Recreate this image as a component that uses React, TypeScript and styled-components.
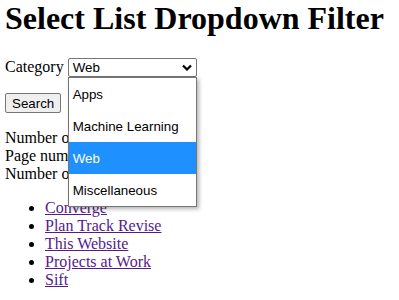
import React from "react";
import styled, { createGlobalStyle } from "styled-components";

const categories = ["Apps", "Machine Learning", "Web", "Miscellaneous"];
const selected = "Web";

const projects = [
  "Converge",
  "Plan Track Revise",
  "This Website",
  "Projects at Work",
  "Sift",
];

const GlobalStyle = createGlobalStyle`
  html, body {
    background: #ffffff;
  }
  body {
    margin: 0 5px;
    font-family: "Liberation Serif", "Times New Roman", serif;
    font-size: 16px;
    color: #000000;
  }
`;

const Title = styled.h1`
  font-size: 32px;
  font-weight: 700;
  margin: 0 0 21px;
`;

const FilterForm = styled.form`
  margin: 0;
`;

const FieldRow = styled.div`
  display: block;
`;

const Label = styled.label`
  margin-right: 4px;
`;

const SelectWrap = styled.span`
  position: relative;
  display: inline-block;
`;

const SelectBox = styled.div`
  box-sizing: border-box;
  display: inline-flex;
  align-items: center;
  justify-content: space-between;
  width: 129px;
  height: 19px;
  padding: 0 3px 0 4px;
  border: 1px solid #767676;
  border-radius: 2px;
  background: #ffffff;
  font-family: "Liberation Sans", Arial, sans-serif;
  font-size: 13.33px;
  color: #000000;
`;

const Chevron = styled.svg`
  width: 10px;
  height: 7px;
  margin-right: 1px;
`;

const Popup = styled.ul`
  position: absolute;
  top: 100%;
  left: 0;
  box-sizing: border-box;
  width: 129px;
  margin: 0;
  padding: 0;
  list-style: none;
  background: #ffffff;
  border: 1px solid #767676;
  box-shadow: 2px 2px 4px rgba(0, 0, 0, 0.3);
  z-index: 10;
`;

const Option = styled.li<{ $active: boolean }>`
  height: 31px;
  padding: 1px 0 0 4px;
  line-height: 32px;
  font-family: "Liberation Sans", Arial, sans-serif;
  font-size: 13.33px;
  white-space: nowrap;
  background: ${(p) => (p.$active ? "#1e90ff" : "#ffffff")};
  color: ${(p) => (p.$active ? "#ffffff" : "#000000")};
`;

const ButtonRow = styled.div`
  margin-top: 16px;
`;

const SearchButton = styled.button`
  box-sizing: border-box;
  height: 20px;
  padding: 0 6px;
  border: 1px solid #767676;
  border-radius: 2px;
  background: #efefef;
  font-family: "Liberation Sans", Arial, sans-serif;
  font-size: 13.33px;
  color: #000000;
`;

const Stats = styled.div`
  margin-top: 16px;
`;

const ProjectList = styled.ul`
  margin: 16px 0;
  padding-left: 40px;
`;

const ProjectLink = styled.a`
  color: #551a8b;
`;

export default function App() {
  return (
    <>
      <GlobalStyle />
      <Title>Select List Dropdown Filter</Title>
      <FilterForm onSubmit={(e) => e.preventDefault()}>
        <FieldRow>
          <Label>Category</Label>
          <SelectWrap>
            <SelectBox>
              <span>{selected}</span>
              <Chevron viewBox="0 0 10 7">
                <path
                  d="M1 1.5 L5 5.5 L9 1.5"
                  fill="none"
                  stroke="#000"
                  strokeWidth="2.2"
                />
              </Chevron>
            </SelectBox>
            <Popup>
              {categories.map((c) => (
                <Option key={c} $active={c === selected}>
                  {c}
                </Option>
              ))}
            </Popup>
          </SelectWrap>
        </FieldRow>
        <ButtonRow>
          <SearchButton type="submit">Search</SearchButton>
        </ButtonRow>
      </FilterForm>
      <Stats>
        <div>Number of results: 5</div>
        <div>Page number: 1</div>
        <div>Number of pages: 1</div>
      </Stats>
      <ProjectList>
        {projects.map((p) => (
          <li key={p}>
            <ProjectLink href="#">{p}</ProjectLink>
          </li>
        ))}
      </ProjectList>
    </>
  );
}
